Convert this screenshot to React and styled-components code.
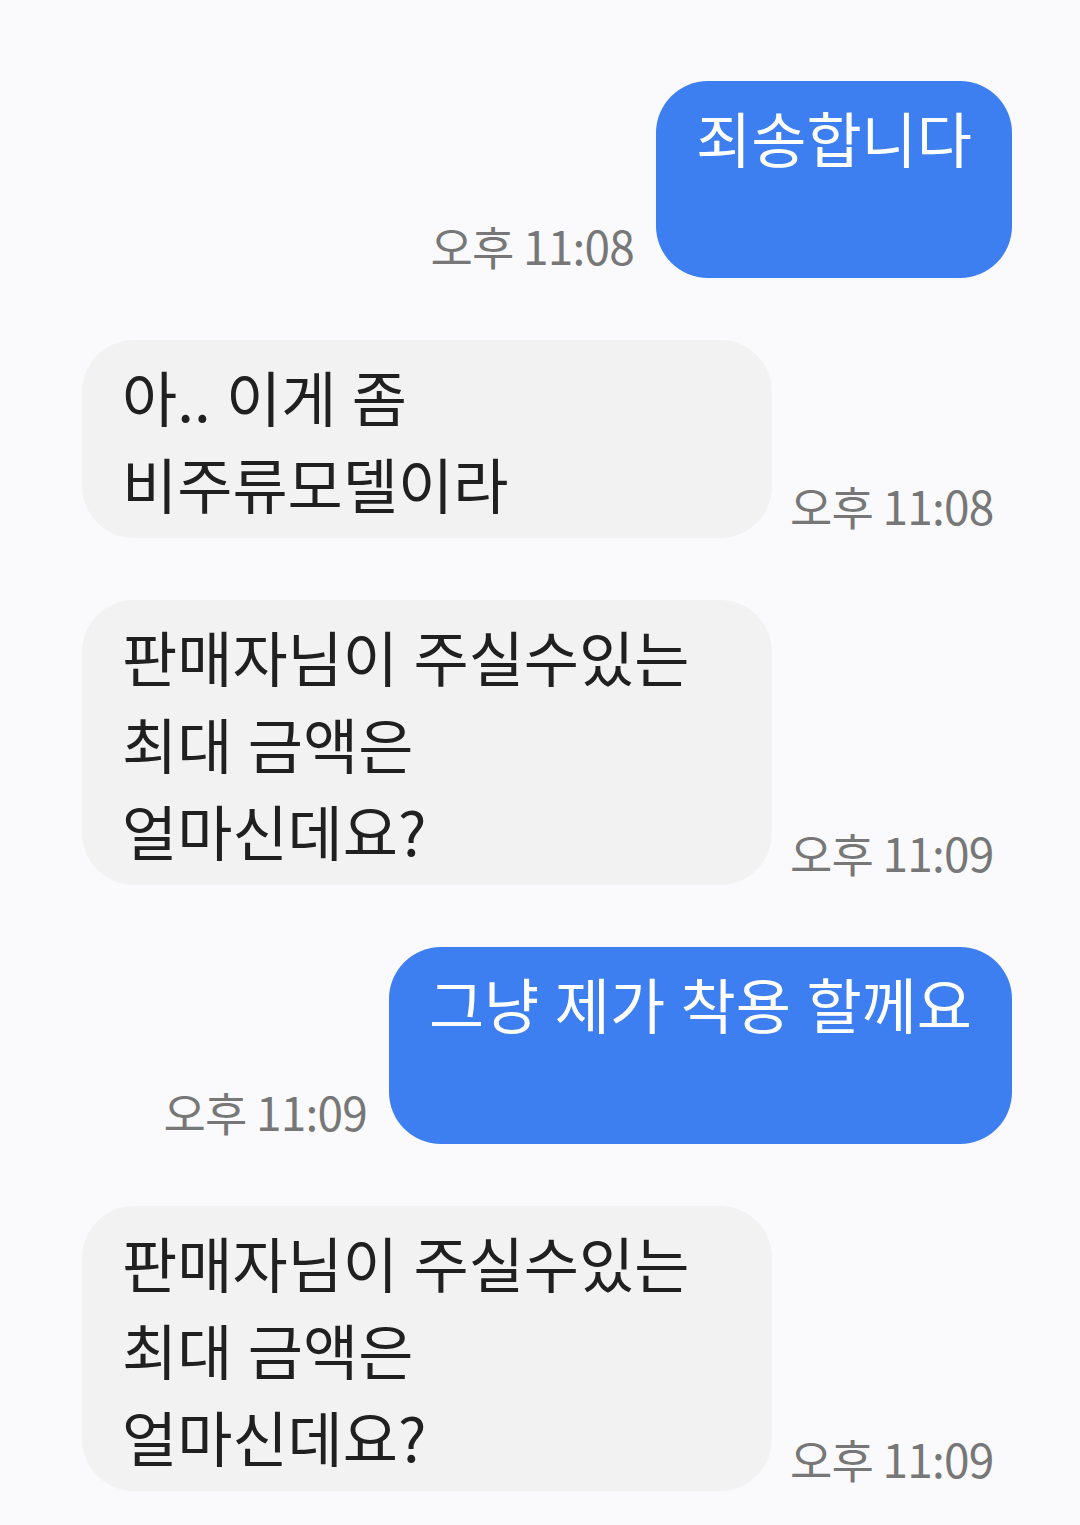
import React from 'react';
import styled, { createGlobalStyle } from 'styled-components';

const GlobalStyle = createGlobalStyle`
    html, body {
        margin: 0;
        padding: 0;
        background-color: #fafafc;
    }
    body {
        font-family: "Noto Sans CJK KR", "Noto Sans", sans-serif;
    }
`;

const ChatContainer = styled.div`
    width: 1080px;
    min-height: 1525px;
    box-sizing: border-box;
    padding: 81px 68px 0 82px;
    display: flex;
    flex-direction: column;
    gap: 62px;
    background-color: #fafafc;
`;

const Row = styled.div`
    display: flex;
    align-items: flex-end;
    justify-content: ${({ mine }) => (mine ? 'flex-end' : 'flex-start')};
    gap: ${({ mine }) => (mine ? '22px' : '18px')};
`;

const Bubble = styled.div`
    max-width: 690px;
    box-sizing: border-box;
    padding: ${({ mine }) => (mine ? '12px 40px 98px' : '12px 40px')};
    border-radius: 52px;
    background-color: ${({ mine }) => (mine ? '#3d7ef0' : '#f2f2f3')};
    color: ${({ mine }) => (mine ? '#ffffff' : '#202020')};
    font-size: 60px;
    line-height: 87px;
    word-spacing: 2px;
    white-space: pre-wrap;
    word-break: keep-all;
`;

const Time = styled.span`
    order: ${({ mine }) => (mine ? -1 : 0)};
    flex-shrink: 0;
    font-size: 46px;
    line-height: 46px;
    letter-spacing: -0.8px;
    color: #777777;
    margin-bottom: 10px;
`;

const messages = [
    { mine: true, text: '죄송합니다', time: '오후 11:08' },
    { mine: false, text: '아.. 이게 좀 비주류모델이라', time: '오후 11:08' },
    { mine: false, text: '판매자님이 주실수있는 최대 금액은\n얼마신데요?', time: '오후 11:09' },
    { mine: true, text: '그냥 제가 착용 할께요', time: '오후 11:09' },
    { mine: false, text: '판매자님이 주실수있는 최대 금액은\n얼마신데요?', time: '오후 11:09' },
];

export default function App() {
    return (
        <>
            <GlobalStyle />
            <ChatContainer>
                {messages.map((m, i) => (
                    <Row key={i} mine={m.mine}>
                        <Bubble mine={m.mine}>{m.text}</Bubble>
                        <Time mine={m.mine}>{m.time}</Time>
                    </Row>
                ))}
            </ChatContainer>
        </>
    );
}
